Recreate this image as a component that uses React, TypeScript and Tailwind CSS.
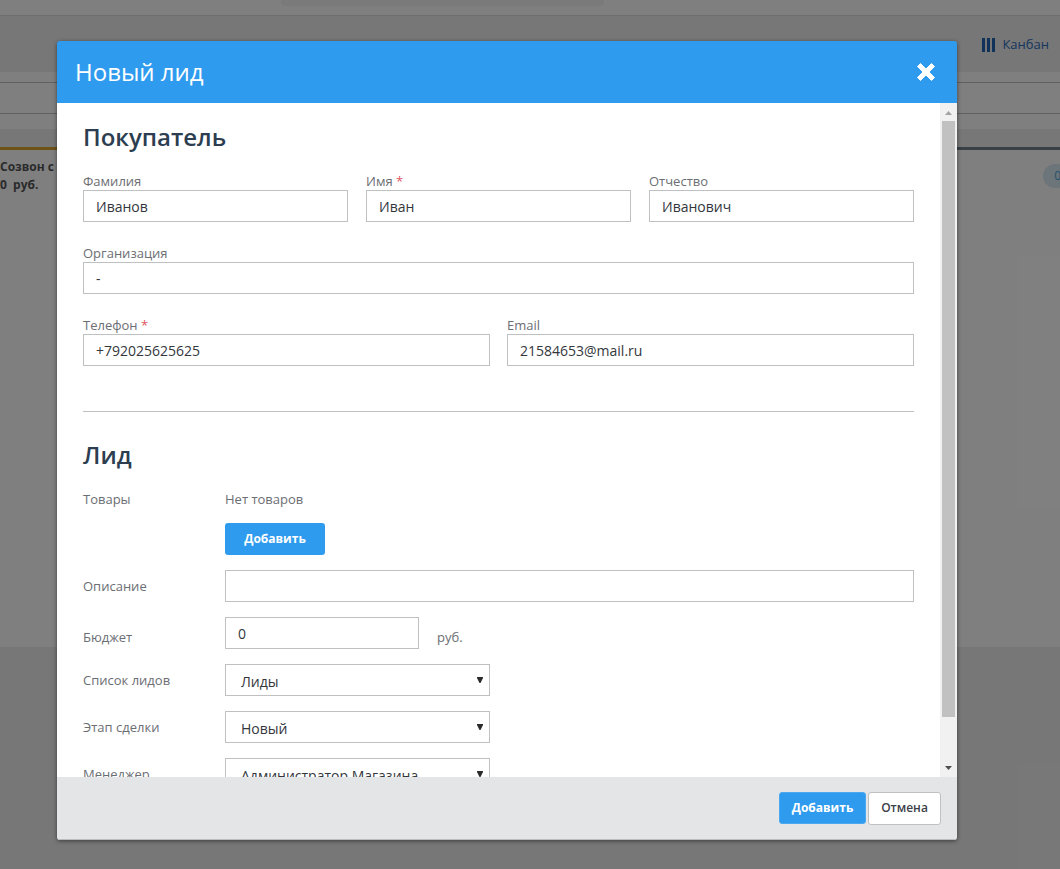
import { useId, type ReactNode } from 'react';

const FIELD =
  'h-8 w-full border border-[#bfc0c2] bg-white px-3 pt-px text-sm text-[#33373d] outline-none focus:border-[#2e9bee]';

const LABEL = 'text-[13px] leading-[18px] text-[#6b6e73]';

const SELECTS = [
  { label: 'Список лидов', value: 'Лиды' },
  { label: 'Этап сделки', value: 'Новый' },
  { label: 'Менеджер', value: 'Администратор Магазина' },
];

interface TextFieldProps {
  label: string;
  value: string;
  type?: string;
  required?: boolean;
}

function TextField({ label, value, type = 'text', required }: TextFieldProps) {
  const id = useId();
  return (
    <div className="flex min-w-0 flex-1 flex-col">
      <label htmlFor={id} className={LABEL}>
        {label}
        {required && <span className="text-[#e0575f]"> *</span>}
      </label>
      <input id={id} type={type} defaultValue={value} className={FIELD} />
    </div>
  );
}

function SelectRow({ label, value }: { label: string; value: string }) {
  const id = useId();
  return (
    <div className="flex items-center">
      <label htmlFor={id} className={`${LABEL} w-[142px] shrink-0`}>
        {label}
      </label>
      <div className="relative w-[265px]">
        <select
          id={id}
          className="block h-8 w-full appearance-none border border-[#bfc0c2] bg-white pt-1 pr-6 pl-[15px] text-sm text-[#33373d] outline-none"
        >
          <option>{value}</option>
        </select>
        <svg
          viewBox="0 0 6 6"
          className="pointer-events-none absolute top-[13px] right-[7px] h-1.5 w-1.5 fill-[#2b2b2b]"
          aria-hidden="true"
        >
          <path d="M0 0h6v1L3.5 6h-1L0 1z" />
        </svg>
      </div>
    </div>
  );
}

function SectionTitle({ children }: { children: ReactNode }) {
  return <h2 className="text-2xl leading-8 font-semibold text-[#2c3e50]">{children}</h2>;
}

// The board that stays visible behind the dialog
function Board() {
  return (
    <div className="flex h-screen flex-col overflow-hidden bg-[#efefef]" aria-hidden="true">
      <div className="flex h-4 shrink-0 justify-center border-b border-[#dcdcdc] bg-white">
        <div className="mr-[175px] h-1.5 w-[323px] rounded-b bg-[#f5f5f5]" />
      </div>
      <div className="flex h-14 shrink-0 items-center justify-end pt-0.5 pr-[11px]">
        <a href="#kanban" className="flex items-center gap-[7px] text-[13px] text-[#2f6cbc]">
          <svg viewBox="0 0 13 14" className="h-3.5 w-[13px] fill-[#2567b2]">
            <path d="M0 0h3v14H0zM5 0h3v14H5zM10 0h3v14h-3z" />
          </svg>
          Канбан
        </a>
      </div>
      <div className="shrink-0 bg-white pt-2.5 pb-[15px]">
        <div className="h-8 border-y border-[#c0c0c0]" />
      </div>
      <div className="grid h-[518px] shrink-0 grid-cols-2 bg-white">
        <div className="flex flex-col">
          <div className="h-[21px] border-b-[3px] border-[#dca62f] bg-[#efefef]" />
          <div className="pt-2 text-xs leading-[18px] font-bold text-[#555]">
            <p>Созвон с</p>
            <p className="whitespace-pre">0  руб.</p>
          </div>
        </div>
        <div className="flex flex-col">
          <div className="h-[21px] border-b-[3px] border-[#73828f] bg-[#efefef]" />
          <div className="flex justify-end pt-3.5">
            <span className="-mr-3 h-6 rounded-full bg-[#d8eaf2] px-[11px] text-xs leading-6 text-[#4aa3d8]">0</span>
          </div>
        </div>
      </div>
    </div>
  );
}

function ScrollTrack() {
  return (
    <div className="flex w-[17px] shrink-0 flex-col items-center bg-[#f1f1f1]" aria-hidden="true">
      <svg viewBox="0 0 17 18" className="h-[18px] w-[17px] shrink-0 fill-[#a3a3a3]">
        <path d="M5 12h7L8.5 8z" />
      </svg>
      <div className="w-[13px] grow-[596] bg-[#c1c1c1]" />
      <div className="grow-[43]" />
      <svg viewBox="0 0 17 17" className="h-[17px] w-[17px] shrink-0 fill-[#505050]">
        <path d="M5 6h7L8.5 10z" />
      </svg>
    </div>
  );
}

function LeadDialog() {
  return (
    <form
      role="dialog"
      aria-labelledby="lead-title"
      onSubmit={(e) => e.preventDefault()}
      className="flex h-full flex-col overflow-hidden rounded-[3px] shadow-[0_1px_4px_rgba(0,0,0,0.5)]"
    >
      <header className="flex h-[62px] shrink-0 items-center justify-between bg-[#2e9bee] pr-[22px] pl-[18px]">
        <h1 id="lead-title" className="text-2xl text-white">
          Новый лид
        </h1>
        <button type="button" aria-label="Закрыть" className="cursor-pointer">
          <svg
            viewBox="0 0 18 18"
            className="h-[18px] w-[18px] fill-white stroke-white"
            strokeWidth="1"
            strokeLinejoin="round"
          >
            <path d="M3.5 .5L9 6 14.5 .5l3 3L12 9l5.500 5.500-3 3L9 12l-5.500 5.500-3-3L6 9 .5 3.500z" />
          </svg>
        </button>
      </header>

      <div className="flex min-h-0 flex-1 bg-white">
        <div className="min-w-0 flex-1 overflow-y-auto px-[26px] pt-[18px] pb-8 [scrollbar-width:none]">
          <SectionTitle>Покупатель</SectionTitle>
          <div className="mt-[19px] flex flex-col gap-[22px]">
            <div className="flex gap-[18px]">
              <TextField label="Фамилия" value="Иванов" />
              <TextField label="Имя" value="Иван" required />
              <TextField label="Отчество" value="Иванович" />
            </div>
            <TextField label="Организация" value="-" />
            <div className="flex gap-[17px]">
              <TextField label="Телефон" value="+792025625625" type="tel" required />
              <TextField label="Email" value="21584653@mail.ru" type="email" />
            </div>
          </div>

          <hr className="mt-[45px] mb-[27px] border-[#bfc0c2]" />

          <SectionTitle>Лид</SectionTitle>
          <div className="mt-[19px] flex flex-col gap-[15px]">
            <div className="flex">
              <span className={`${LABEL} w-[142px] shrink-0`}>Товары</span>
              <div className="flex flex-col items-start gap-[15px]">
                <span className={LABEL}>Нет товаров</span>
                <button type="button" className="h-8 w-[100px] rounded-[3px] bg-[#2e9bee] text-xs font-bold text-white">
                  Добавить
                </button>
              </div>
            </div>
            <div className="flex items-center">
              <label htmlFor="description" className={`${LABEL} w-[142px] shrink-0`}>
                Описание
              </label>
              <input id="description" type="text" className={FIELD} />
            </div>
            <div className="flex items-end">
              <label htmlFor="budget" className="w-[142px] shrink-0 text-[13px] leading-6 text-[#6b6e73]">
                Бюджет
              </label>
              <div className="w-[194px]">
                <input id="budget" type="text" defaultValue="0" className={FIELD} />
              </div>
              <span className="ml-[18px] text-[13px] leading-6 text-[#6b6e73]">руб.</span>
            </div>
            {SELECTS.map(({ label, value }) => (
              <SelectRow key={label} label={label} value={value} />
            ))}
          </div>
        </div>
        <ScrollTrack />
      </div>

      <footer className="flex h-[63px] shrink-0 items-center justify-end gap-0.5 border-b border-[#bcbdbf] bg-[#e4e5e7] pr-4">
        <button
          type="submit"
          className="h-8 w-[87px] rounded-[3px] border border-[#4aa8f0] bg-[#2e9bee] text-xs font-bold text-white"
        >
          Добавить
        </button>
        <button
          type="button"
          className="h-[33px] w-[73px] rounded-[3px] border border-[#bfc0c2] bg-white text-xs font-semibold text-[#3b4048]"
        >
          Отмена
        </button>
      </footer>
    </form>
  );
}

export default function App() {
  return (
    <div className="relative h-screen overflow-hidden font-['Open_Sans','Noto_Sans',sans-serif]">
      <Board />
      <div className="absolute inset-0 bg-black/50 pt-[41px] pr-[103px] pb-[29px] pl-[57px]">
        <LeadDialog />
      </div>
    </div>
  );
}
